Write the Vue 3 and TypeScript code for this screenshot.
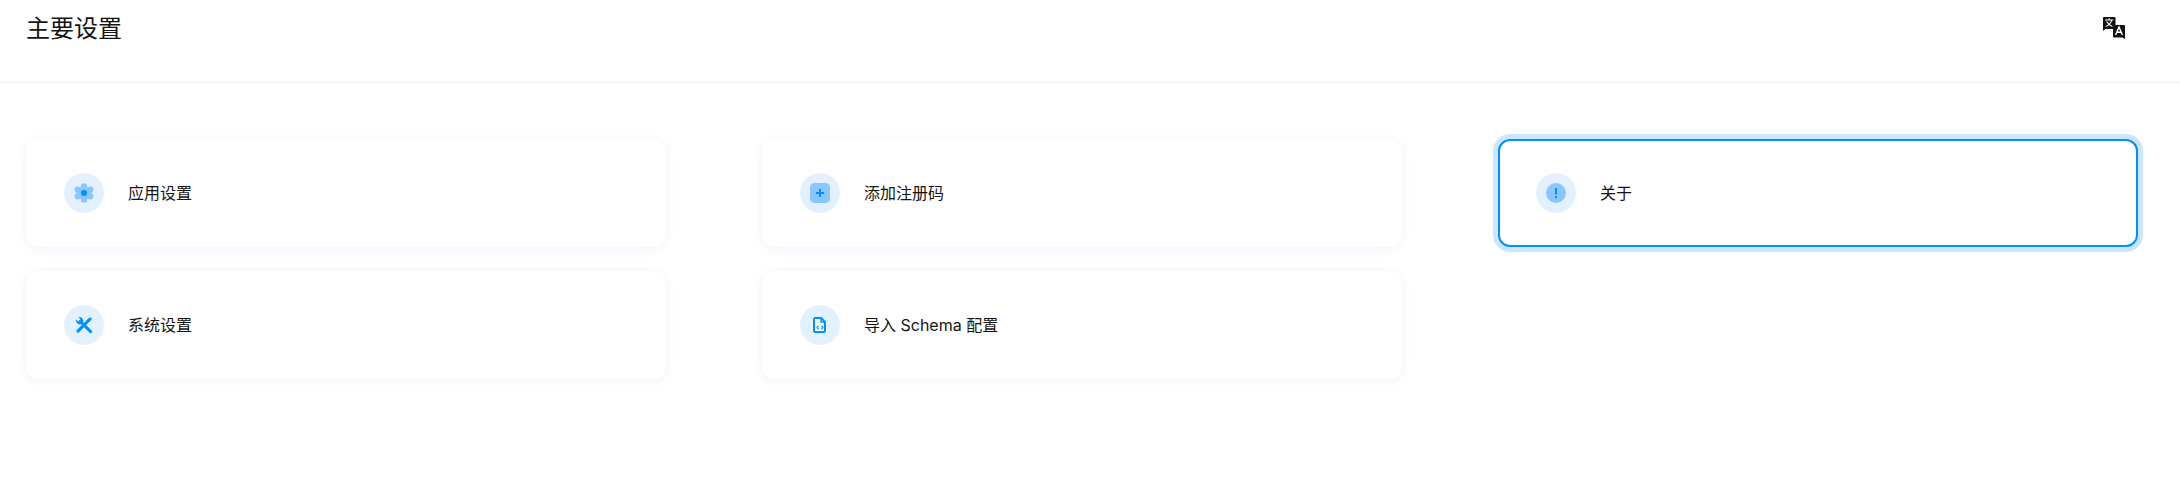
<script setup lang="ts">
interface Item { key: string; label: string; active?: boolean }
const items: Item[] = [
  { key: 'gear', label: '应用设置' },
  { key: 'plus', label: '添加注册码' },
  { key: 'info', label: '关于', active: true },
  { key: 'tools', label: '系统设置' },
  { key: 'file', label: '导入 Schema 配置' },
]
</script>

<template>
  <div class="page">
    <header class="head">
      <h1 class="title">主要设置</h1>
      <svg class="lang" viewBox="0 0 24 24" width="24" height="24" aria-hidden="true">
        <path d="M3 1h10.500a1 1 0 0 1 1 1v10a1 1 0 0 1-1 1H4.500L2 15V2a1 1 0 0 1 1-1z" fill="#111" />
        <path d="M4 4h8.400M8.200 2.400V4M10.800 4.200c-1 3-3 5-6 6.300M5.600 5.600c1.200 2.200 3.200 3.800 5.800 4.800" fill="none" stroke="#fff" stroke-width="1.100" />
        <path d="M13 9h10a1 1 0 0 1 1 1v13l-2.500-1.600H13a1 1 0 0 1-1-1V10a1 1 0 0 1 1-1z" fill="#111" />
        <path d="M14.600 19l3.400-8 3.400 8M15.800 16.200h4.400" fill="none" stroke="#fff" stroke-width="1.400" />
      </svg>
    </header>
    <main class="grid">
      <div v-for="item in items" :key="item.key" class="card" :class="{ active: item.active }">
        <span class="badge">
          <svg v-if="item.key === 'gear'" viewBox="0 0 20 20" width="20" height="20">
            <g fill="#8ac6ff">
              <circle cx="10" cy="10" r="6.800" />
              <circle cx="10" cy="3.400" r="3.200" />
              <circle cx="10" cy="16.600" r="3.200" />
              <circle cx="3.600" cy="6.700" r="3.100" />
              <circle cx="16.400" cy="6.700" r="3.100" />
              <circle cx="3.600" cy="13.300" r="3.100" />
              <circle cx="16.400" cy="13.300" r="3.100" />
            </g>
            <circle cx="10" cy="10" r="3" fill="#0090ff" />
          </svg>
          <svg v-else-if="item.key === 'plus'" viewBox="0 0 20 20" width="20" height="20">
            <rect width="20" height="20" rx="4.500" fill="#8ac6ff" />
            <path d="M10 6v8M6 10h8" stroke="#0090ff" stroke-width="2" fill="none" />
          </svg>
          <svg v-else-if="item.key === 'info'" viewBox="0 0 20 20" width="20" height="20">
            <circle cx="10" cy="10" r="10" fill="#8ac6ff" />
            <path d="M10 5v6.400" stroke="#0090ff" stroke-width="2" fill="none" />
            <rect x="9" y="13" width="2" height="2" fill="#0090ff" />
          </svg>
          <svg v-else-if="item.key === 'tools'" viewBox="0 0 20 20" width="20" height="20">
            <path d="M6.500 6.500 16.600 16.600" stroke="#0090ff" stroke-width="3" stroke-linecap="round" fill="none" />
            <path d="M2.100 4.300 4.200 6.400l2.200-2.200-2.100-2.100A4 4 0 0 1 9.200 7L7 9.200A4 4 0 0 1 2.100 4.300z" fill="#0090ff" />
            <path d="M14.800 5.200 3.900 16.100" stroke="#0090ff" stroke-width="3" stroke-linecap="round" fill="none" />
            <path d="M13.400 4.600 16.400 2.200l1.600 1.600-2.400 3z" fill="#0090ff" />
          </svg>
          <svg v-else viewBox="0 0 20 20" width="20" height="20">
            <path d="M5.200 3h6l3.800 3.800v9a1.200 1.200 0 0 1-1.200 1.200H5.200A1.200 1.200 0 0 1 4 15.800V4.200A1.200 1.200 0 0 1 5.200 3z" fill="#f2f9ff" stroke="#0090ff" stroke-width="2" />
            <path d="M11 3v4h4" fill="none" stroke="#0090ff" stroke-width="1.400" />
            <path d="M8.600 10.800 7 12.500l1.600 1.700M11.400 10.800l1.600 1.700-1.600 1.700" fill="none" stroke="#2d9ffb" stroke-width="1.300" />
          </svg>
        </span>
        <span class="label">{{ item.label }}</span>
      </div>
    </main>
  </div>
</template>

<style>
html, body { margin: 0; background: #fff; }
</style>

<style scoped>
.page {
  font-family: Inter, "Noto Sans CJK SC", sans-serif;
  color: #141414;
  width: 2180px;
  height: 494px;
  overflow: hidden;
}
.head {
  height: 82px;
  border-bottom: 1px solid #f0f0f0;
  display: flex;
  justify-content: space-between;
  align-items: flex-start;
  padding: 0 55px 0 26px;
}
.title {
  margin: 0;
  font-size: 24px;
  font-weight: 400;
  line-height: 58px;
}
.lang { margin-top: 16px; }
.grid {
  display: grid;
  grid-template-columns: repeat(3, 640px);
  grid-auto-rows: 108px;
  gap: 24px 96px;
  padding: 56px 0 0 26px;
}
.card {
  display: flex;
  align-items: center;
  gap: 24px;
  padding-left: 38px;
  border-radius: 12px;
  background: #fff;
  box-shadow: 0 1px 12px rgba(0, 144, 255, 0.09);
  box-sizing: border-box;
}
.card.active {
  border: 2px solid #0090ff;
  padding-left: 36px;
  box-shadow: 0 0 0 5px #cbe6ff;
}
.badge {
  width: 40px;
  height: 40px;
  border-radius: 50%;
  background: #e3f1ff;
  display: flex;
  align-items: center;
  justify-content: center;
  flex: none;
}
.label {
  font-size: 16px;
  line-height: 24px;
}
</style>
